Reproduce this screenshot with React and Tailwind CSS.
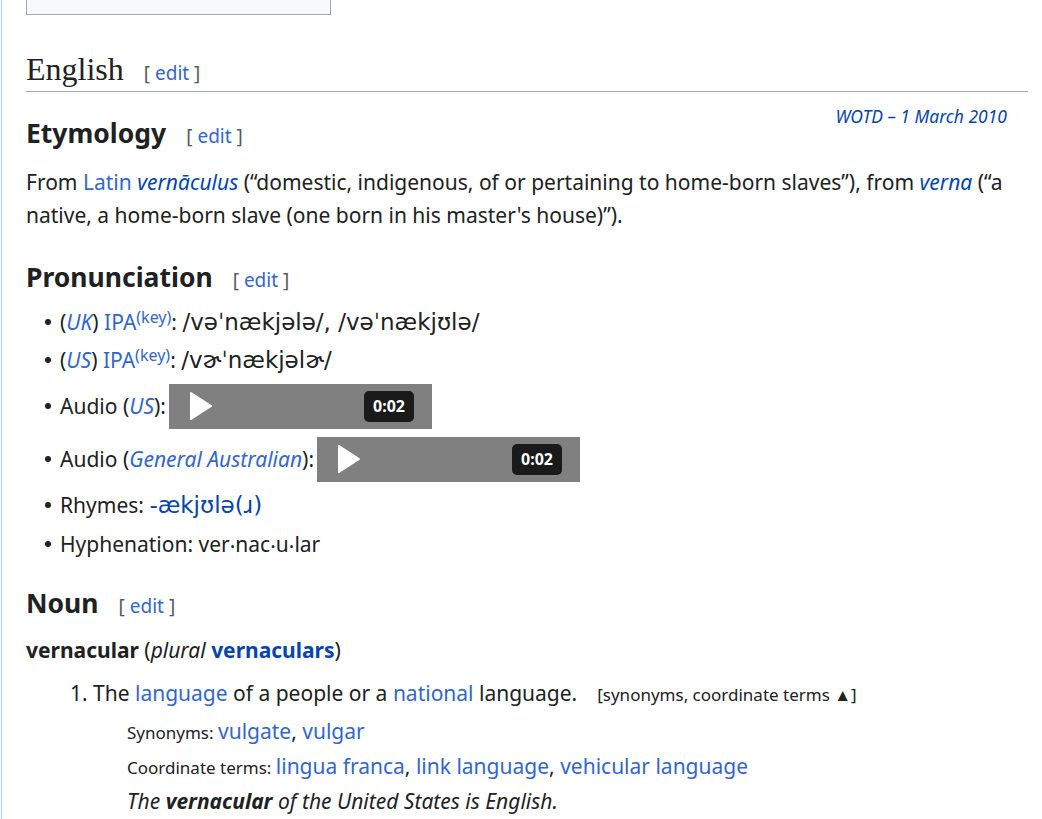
import React from 'react';

const L = ({ children, dark, className = '' }) => (
  <a href="#" className={`${dark ? 'text-[#0645ad]' : 'text-[#3366cc]'} ${className}`}>{children}</a>
);

const Ipa = ({ children }) => (
  <span className="font-['DejaVu_Sans',sans-serif] text-[23px]">{children}</span>
);

const Edit = () => (
  <span className="ml-[20px] text-[19px] font-normal text-[#54595d] font-['Noto_Sans',sans-serif]">
    [ <L>edit</L> ]
  </span>
);

const Player = () => (
  <span className="inline-flex items-center justify-between w-[263px] h-[45px] bg-[#808080] pl-[20px] pr-[18px] align-middle">
    <svg width="24" height="30" viewBox="0 0 24 30">
      <path d="M2 2 L22 15 L2 28 Z" fill="#fff" stroke="#fff" strokeWidth="2" strokeLinejoin="round" />
    </svg>
    <span className="bg-[#1a1a1a] text-white text-[16px] font-bold rounded-[5px] w-[50px] h-[31px] flex items-center justify-center">0:02</span>
  </span>
);

const Bullet = ({ children, className = '' }) => (
  <li className={`flex items-center ${className}`}>
    <span className="w-[6px] h-[6px] rounded-full bg-[#202122] mr-[9px] ml-[1px]" />
    <span>{children}</span>
  </li>
);

export default function App() {
  return (
    <div className="min-h-screen bg-white border-l border-[#a7d7f9] ml-[1px] pl-[24px] pr-[14px] text-[#202122] font-['Noto_Sans',sans-serif] text-[21px] leading-[33px]">
      <div className="w-[305px] h-[15px] bg-[#f8f9fa] border border-t-0 border-[#a2a9b1]" />

      <h2 className="mt-[36px] border-b border-[#a2a9b1] pb-[1px] flex items-baseline">
        <span className="font-['Liberation_Serif',serif] text-[32px] leading-[36px]">English</span>
        <Edit />
      </h2>

      <div className="float-right mt-[13px] mr-[21px] text-[17.5px] italic leading-[22px]">
        <L dark>WOTD – 1 March 2010</L>
      </div>
      <h3 className="mt-[24px] flex items-baseline">
        <span className="font-bold text-[26.5px] leading-[34px]">Etymology</span>
        <Edit />
      </h3>
      <p className="mt-[13px]">
        From <L>Latin</L> <L dark className="italic">vernāculus</L> (“domestic, indigenous, of or pertaining to home-born slaves”), from <L dark className="italic">verna</L> (“a native, a home-born slave (one born in his master's house)”).
      </p>

      <h3 className="mt-[28px] flex items-baseline">
        <span className="font-bold text-[26.5px] leading-[34px]">Pronunciation</span>
        <Edit />
      </h3>
      <ul className="mt-[6px] ml-[18px]">
        <Bullet className="h-[38px]">
          (<L className="italic">UK</L>) <L>IPA</L><sup className="text-[16px] -top-[7px]"><L>(key)</L></sup>: <Ipa>/vəˈnækjələ/, /vəˈnækjʊlə/</Ipa>
        </Bullet>
        <Bullet className="h-[38px]">
          (<L className="italic">US</L>) <L>IPA</L><sup className="text-[16px] -top-[7px]"><L>(key)</L></sup>: <Ipa>/vɚˈnækjəlɚ/</Ipa>
        </Bullet>
        <Bullet className="h-[54px]">
          <span className="flex items-center">Audio (<L className="italic">US</L>):<span className="ml-[3px]"><Player /></span></span>
        </Bullet>
        <Bullet className="h-[52px]">
          <span className="flex items-center">Audio (<L className="italic">General Australian</L>):<span className="ml-[3px]"><Player /></span></span>
        </Bullet>
        <Bullet className="h-[40px]">
          Rhymes: <L dark><Ipa>-ækjʊlə(ɹ)</Ipa></L>
        </Bullet>
        <Bullet className="h-[38px]">
          Hyphenation: ver‧nac‧u‧lar
        </Bullet>
      </ul>

      <h3 className="mt-[23px] flex items-baseline">
        <span className="font-bold text-[26.5px] leading-[34px]">Noun</span>
        <Edit />
      </h3>
      <p className="mt-[11px]">
        <strong>vernacular</strong> (<i>plural</i> <L dark className="font-bold">vernaculars</L>)
      </p>
      <ol className="mt-[10px] ml-[44px]">
        <li className="flex">
          <span className="w-[23px]">1.</span>
          <div>
            <div>
              The <L>language</L> of a people or a <L>national</L> language.
              <span className="ml-[20px] text-[17px]">[synonyms, coordinate terms ▲]</span>
            </div>
            <div className="ml-[34px] mt-[4px]">
              <div className="h-[35px]"><span className="text-[17px]">Synonyms: </span><L>vulgate</L>, <L>vulgar</L></div>
              <div className="h-[35px]"><span className="text-[17px]">Coordinate terms: </span><L>lingua franca</L>, <L>link language</L>, <L>vehicular language</L></div>
              <div className="h-[35px] italic">The <b>vernacular</b> of the United States is English.</div>
            </div>
          </div>
        </li>
      </ol>
    </div>
  );
}
